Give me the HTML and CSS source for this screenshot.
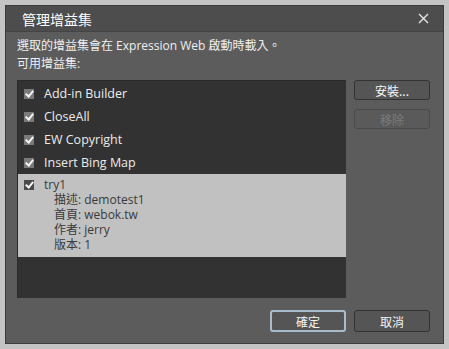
FILE: index.html
```html
<!DOCTYPE html>
<html lang="zh-Hant">
<head>
    <meta charset="UTF-8">
    <meta name="viewport" content="width=device-width, initial-scale=1.0">
    <title>管理增益集</title>
    <link rel="stylesheet" href="styles.css">
</head>
<body>
    <div class="dialog">
        <div class="titlebar">
            <span class="title">管理增益集</span>
            <span class="close">
                <svg width="11" height="11" viewBox="0 0 11 11">
                    <path d="M1 1 L10 10 M10 1 L1 10" stroke="#e6e6e6" stroke-width="1.4"/>
                </svg>
            </span>
        </div>
        <div class="content">
            <p class="intro">選取的增益集會在 Expression Web 啟動時載入。</p>
            <p class="intro">可用增益集:</p>
            <div class="main">
                <div class="lista">
                    <div class="item"><span class="check"></span>Add-in Builder</div>
                    <div class="item"><span class="check"></span>CloseAll</div>
                    <div class="item"><span class="check"></span>EW Copyright</div>
                    <div class="item"><span class="check"></span>Insert Bing Map</div>
                    <div class="item selected">
                        <div><span class="check"></span>try1</div>
                        <div class="info">描述: demotest1</div>
                        <div class="info">首頁: webok.tw</div>
                        <div class="info">作者: jerry</div>
                        <div class="info">版本: 1</div>
                    </div>
                </div>
                <div class="side">
                    <button class="btn">安裝...</button>
                    <button class="btn" disabled>移除</button>
                </div>
            </div>
            <div class="footer">
                <button class="btn default">確定</button>
                <button class="btn">取消</button>
            </div>
        </div>
    </div>
</body>
</html>
```

FILE: styles.css
```css
html, body {
    margin: 0;
    padding: 0;
    height: 100%;
}

body {
    background-color: #c4c4c4;
    font-family: "Open Sans", "Noto Sans CJK TC", sans-serif;
    font-size: 12px;
    color: #f0f0f0;
    box-sizing: border-box;
    padding: 5px 5px 5px 5px;
}

.dialog {
    height: 100%;
    box-sizing: border-box;
    background-color: #5c5c5c;
    border: 1px solid #3c3c3c;
    display: flex;
    flex-direction: column;
}

.titlebar {
    height: 25px;
    background-color: #4d4d4d;
    border-bottom: 1px solid #444;
    display: flex;
    align-items: center;
    justify-content: space-between;
    padding: 0 14px 0 16px;
}

.title {
    font-family: "Noto Sans CJK TC", sans-serif;
    font-size: 14px;
    color: #fff;
}

.close {
    display: flex;
}

.content {
    flex: 1;
    padding: 5px 13px 0 11px;
    display: flex;
    flex-direction: column;
}

.intro {
    margin: 0;
    line-height: 18px;
}

.main {
    display: flex;
    gap: 8px;
    margin-top: 7px;
}

.lista {
    width: 329px;
    height: 218px;
    background-color: #323232;
    border-top: 1px solid #2a2a2a;
    border-left: 1px solid #2a2a2a;
    box-sizing: border-box;
    padding-top: 1px;
}

.item {
    height: 23px;
    line-height: 23px;
    padding-left: 6px;
    color: #ececec;
    font-size: 12.5px;
}

.item.selected {
    height: 83px;
    background-color: #c1c1c1;
    color: #3a3a3a;
    font-size: 12px;
    line-height: 15px;
    padding-top: 3px;
    box-sizing: border-box;
}

.selected > div {
    height: 15px;
    overflow: visible;
}

.check {
    display: inline-block;
    width: 10px;
    height: 10px;
    background-color: #7a7a7a;
    vertical-align: -1px;
    margin-right: 10px;
    position: relative;
}

.check::after {
    content: "";
    position: absolute;
    left: 3px;
    top: 0px;
    width: 3px;
    height: 6px;
    border-right: 2px solid #f4f4f4;
    border-bottom: 2px solid #f4f4f4;
    transform: rotate(40deg);
}

.selected .check {
    background-color: #4a4a4a;
}

.info {
    padding-left: 30px;
}

.side {
    display: flex;
    flex-direction: column;
    gap: 9px;
}

.btn {
    width: 76px;
    height: 20px;
    background-color: #555;
    color: #f4f4f4;
    border: 1px solid #333;
    border-radius: 3px;
    font-family: "Noto Sans CJK TC", sans-serif;
    font-size: 12px;
    padding: 0;
    cursor: pointer;
}

.btn:disabled {
    color: #7a7a7a;
    border-color: #4a4a4a;
    background-color: #5a5a5a;
}

.btn.default {
    border: 2px solid #a9bccb;
}

.footer {
    display: flex;
    justify-content: flex-end;
    gap: 8px;
    margin-top: 12px;
}

.footer .btn {
    height: 22px;
}
```
